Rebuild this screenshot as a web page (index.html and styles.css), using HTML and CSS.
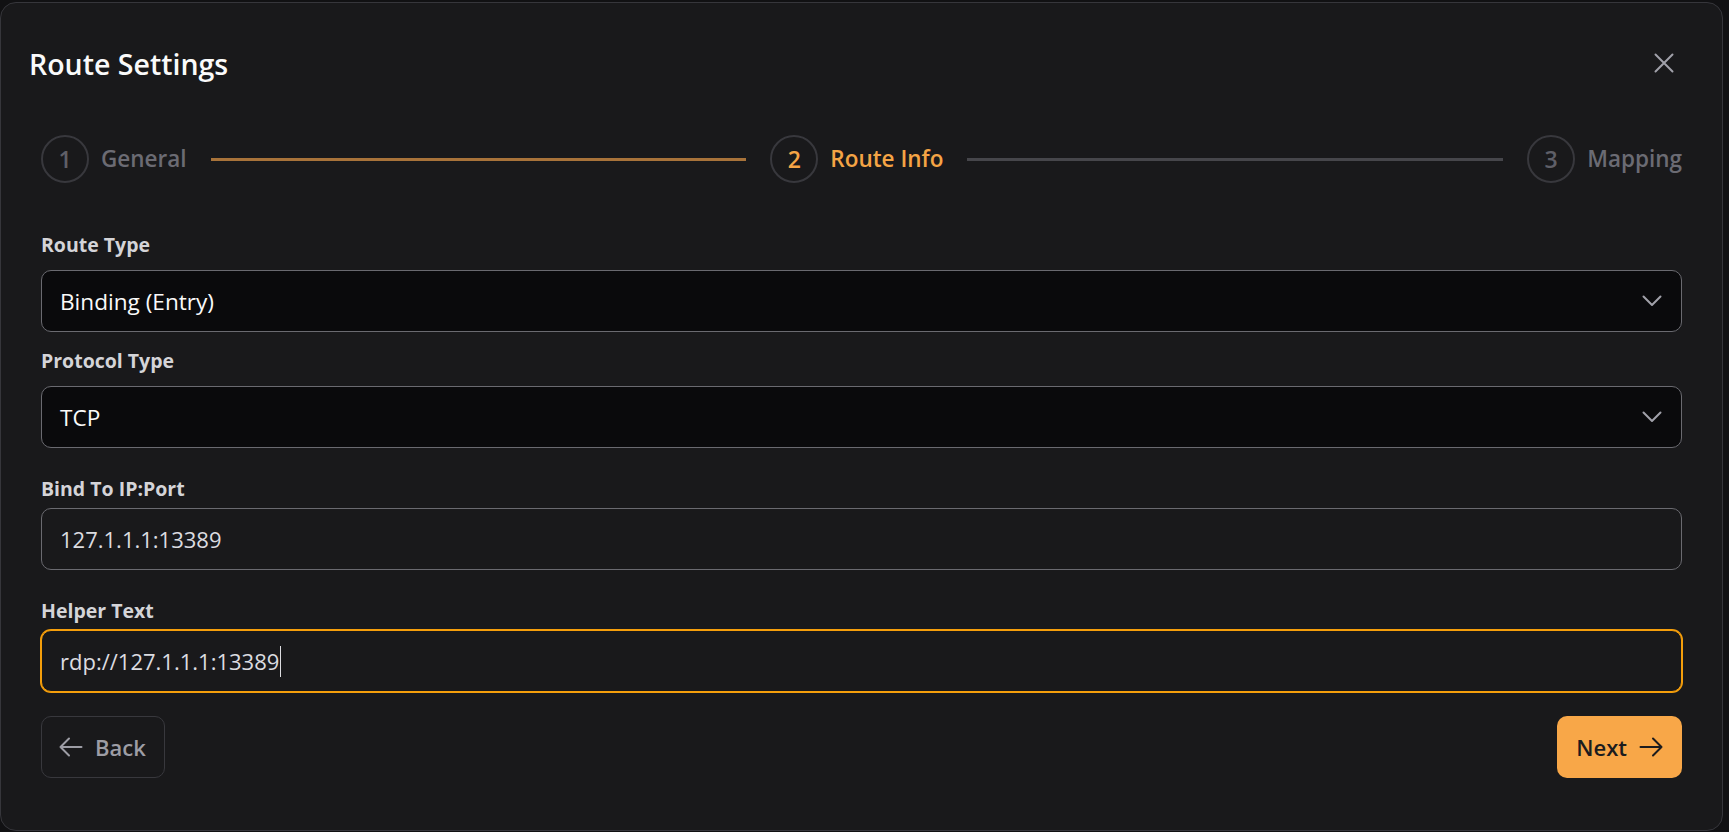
FILE: index.html
```html
<!DOCTYPE html>
<html lang="en">
<head>
<meta charset="utf-8">
<title>Route Settings</title>
<link rel="stylesheet" href="styles.css">
</head>
<body>
<div class="modal">
  <div class="header">
    <h2 class="title">Route Settings</h2>
    <button class="close" aria-label="Close">
      <svg width="20" height="20" viewBox="0 0 20 20" fill="none" stroke="currentColor" stroke-width="2" stroke-linecap="round"><path d="M1.5 1.5L18.5 18.5M18.5 1.5L1.5 18.5"/></svg>
    </button>
  </div>

  <div class="stepper">
    <div class="step">
      <span class="circle">1</span>
      <span class="step-label">General</span>
    </div>
    <div class="line line-done"></div>
    <div class="step step-current">
      <span class="circle">2</span>
      <span class="step-label">Route Info</span>
    </div>
    <div class="line"></div>
    <div class="step">
      <span class="circle">3</span>
      <span class="step-label">Mapping</span>
    </div>
  </div>

  <div class="form">
    <div class="field field-select">
      <label class="label">Route Type</label>
      <div class="control select">
        <span class="value">Binding (Entry)</span>
        <svg class="chevron" width="20" height="12" viewBox="0 0 20 12" fill="none" stroke="currentColor" stroke-width="2" stroke-linecap="round" stroke-linejoin="round"><path d="M1.5 1.5L10 10L18.5 1.5"/></svg>
      </div>
    </div>
    <div class="field field-select">
      <label class="label">Protocol Type</label>
      <div class="control select">
        <span class="value">TCP</span>
        <svg class="chevron" width="20" height="12" viewBox="0 0 20 12" fill="none" stroke="currentColor" stroke-width="2" stroke-linecap="round" stroke-linejoin="round"><path d="M1.5 1.5L10 10L18.5 1.5"/></svg>
      </div>
    </div>
    <div class="field field-input">
      <label class="label">Bind To IP:Port</label>
      <div class="control input">
        <span class="value">127.1.1.1:13389</span>
      </div>
    </div>
    <div class="field field-input">
      <label class="label">Helper Text</label>
      <div class="control input input-focus">
        <span class="value">rdp://127.1.1.1:13389</span><span class="caret"></span>
      </div>
    </div>
  </div>

  <div class="footer">
    <button class="btn btn-back">
      <svg width="24" height="20" viewBox="0 0 24 20" fill="none" stroke="currentColor" stroke-width="2" stroke-linecap="round" stroke-linejoin="round"><path d="M22.5 10H1.5M10 1.5L1.5 10L10 18.5"/></svg>
      <span>Back</span>
    </button>
    <button class="btn btn-next">
      <span>Next</span>
      <svg width="24" height="20" viewBox="0 0 24 20" fill="none" stroke="currentColor" stroke-width="2" stroke-linecap="round" stroke-linejoin="round"><path d="M1.5 10H22.5M14 1.5L22.5 10L14 18.5"/></svg>
    </button>
  </div>
</div>
</body>
</html>
```

FILE: styles.css
```css
* {
  box-sizing: border-box;
}

html, body {
  margin: 0;
  padding: 0;
  background: #111113;
  overflow: hidden;
  font-family: "Open Sans", "Noto Sans", sans-serif;
}

.modal {
  width: 1723px;
  height: 829px;
  margin-top: 2px;
  border: 1px solid #36363b;
  border-radius: 16px;
  background: #19191b;
  padding: 0 40px;
}

.header {
  display: flex;
  justify-content: space-between;
  align-items: center;
  padding-top: 43px;
  height: 79px;
  margin-left: -12px;
}

.title {
  margin: 0;
  font-size: 28.5px;
  line-height: 36px;
  font-weight: 600;
  color: #fafafa;
}

.close {
  width: 36px;
  height: 36px;
  margin-top: -3px;
  padding: 0;
  border: none;
  background: none;
  color: #a1a1aa;
  display: flex;
  align-items: center;
  justify-content: center;
}

.stepper {
  margin-top: 53px;
  height: 48px;
  display: flex;
  align-items: center;
}

.step {
  display: flex;
  align-items: center;
  color: #6b6b73;
}

.circle {
  width: 48px;
  height: 48px;
  border: 2px solid #38383d;
  border-radius: 50%;
  display: flex;
  align-items: center;
  justify-content: center;
  font-size: 23px;
  font-weight: 600;
  color: #5f5f67;
}

.step-label {
  margin-left: 12px;
  font-size: 22.5px;
  font-weight: 600;
  line-height: 30px;
}

.step-current,
.step-current .circle {
  color: #f5a445;
}

.line {
  flex: 1;
  height: 3px;
  margin: 0 24px;
  background: #46464b;
}

.line-done {
  background: #a8733a;
}

.form {
  margin-top: 49.5px;
}

.label {
  display: block;
  font-size: 19.5px;
  line-height: 24px;
  font-weight: 700;
  color: #d4d4d8;
}

.field-select .label {
  margin-bottom: 13.5px;
}

.field-select + .field-select {
  margin-top: 16.5px;
}

.field-input {
  margin-top: 28.5px;
}

.field-input .label {
  margin-bottom: 7.5px;
}

.control {
  height: 62px;
  border: 1px solid #6a6a70;
  border-radius: 10px;
  padding: 0 19px 0 18px;
  display: flex;
  align-items: center;
  font-size: 22px;
}

.select {
  background: #0a0a0c;
  justify-content: space-between;
  color: #fafafa;
}

.select .value {
  font-size: 22.6px;
}

.chevron {
  color: #a1a1aa;
}

.input {
  background: #19191b;
  color: #dcdce0;
}

.input-focus {
  border-color: #f59e0b;
  box-shadow: 0 0 0 1px #f59e0b;
}

.caret {
  display: inline-block;
  width: 1px;
  height: 31px;
  margin-left: 1px;
  background: #dcdce0;
}

.footer {
  margin-top: 24px;
  display: flex;
  justify-content: space-between;
}

.btn {
  height: 62px;
  border-radius: 10px;
  display: flex;
  align-items: center;
  gap: 12px;
  font-family: "Open Sans", "Noto Sans", sans-serif;
  font-size: 22px;
  font-weight: 600;
  cursor: pointer;
}

.btn-back {
  padding: 0 18px 0 17px;
  border: 1px solid #38383d;
  background: #19191b;
  color: #9d9da5;
}

.btn-next {
  padding: 0 19px 0 19px;
  border: none;
  background: #f8a748;
  color: #1c1c1e;
}
```
